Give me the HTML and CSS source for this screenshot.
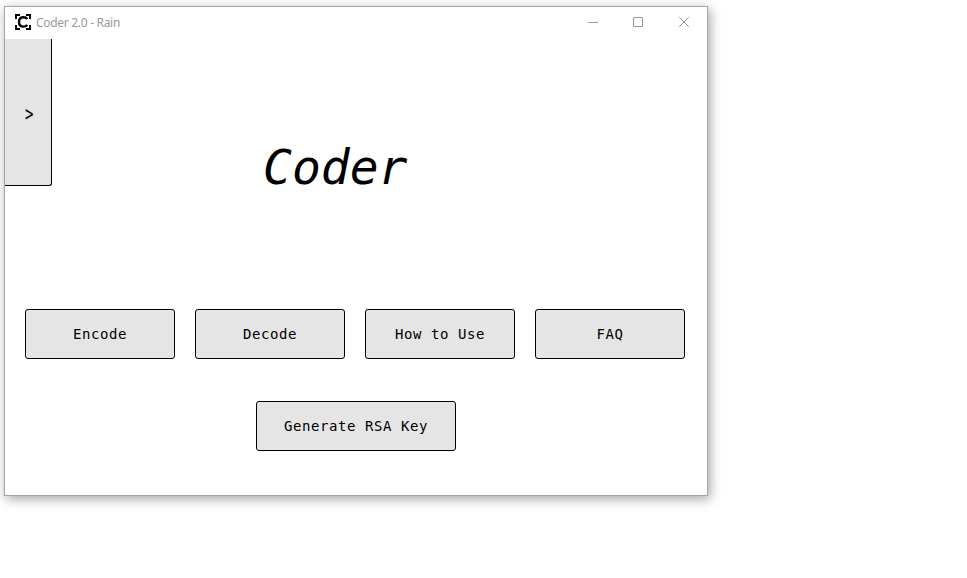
FILE: index.html
```html
<!DOCTYPE html>
<html lang="en">
<head>
<meta charset="utf-8">
<title>Coder 2.0 - Rain</title>
<link rel="stylesheet" href="styles.css">
</head>
<body>
<div class="window">
  <header class="titlebar">
    <svg class="logo" width="16" height="16" viewBox="0 0 16 16" fill="none" stroke="#000">
      <path stroke-width="2" d="M1 5V1H5M11 1H15V5M1 11V15H5M11 15H15V11"/>
      <path stroke-width="2.4" d="M12.2 5.2C11.4 3.9 10 3.3 8.5 3.3C5.6 3.3 4 5.2 4 8C4 10.8 5.6 12.6 8.5 12.6C10 12.6 11.4 12 12.2 10.8"/>
    </svg>
    <span class="caption">Coder 2.0 - Rain</span>
    <div class="controls">
      <svg width="46" height="31" viewBox="0 0 46 31"><path d="M19 15.5H29"/></svg>
      <svg width="46" height="31" viewBox="0 0 46 31"><path d="M18.5 10.5H27.5V19.5H18.5Z"/></svg>
      <svg width="46" height="31" viewBox="0 0 46 31"><path d="M18.2 10.2L27.8 19.8M27.8 10.2L18.2 19.8"/></svg>
    </div>
  </header>
  <main class="content">
    <section class="hero">
      <button class="drawer" type="button"><span class="chevron">&gt;</span></button>
      <h1 class="title">Coder</h1>
    </section>
    <nav class="actions">
      <button class="btn" type="button">Encode</button>
      <button class="btn" type="button">Decode</button>
      <button class="btn" type="button">How to Use</button>
      <button class="btn" type="button">FAQ</button>
    </nav>
    <button class="btn wide" type="button">Generate RSA Key</button>
  </main>
</div>
</body>
</html>
```

FILE: styles.css
```css
* { box-sizing: border-box; }
body {
  margin: 0;
  min-height: 100vh;
  padding: 6px 0 0 4px;
  background: #fff;
}
.window {
  width: 704px;
  height: 490px;
  border: 1px solid #a6a6a6;
  background: #fff;
  box-shadow: 2px 3px 11px rgba(0, 0, 0, 0.36);
}
.titlebar {
  display: flex;
  align-items: center;
  height: 32px;
  padding-left: 10px;
}
.logo { display: block; margin-right: 5px; margin-top: -2px; }
.caption {
  font: 12px/16px "Noto Sans", sans-serif;
  letter-spacing: -0.3px;
  color: #999;
  white-space: nowrap;
}
.controls {
  display: flex;
  align-self: flex-start;
  margin-left: auto;
}
.controls svg { display: block; fill: none; stroke: #999; }
.content { display: flex; flex-direction: column; }
.hero {
  display: flex;
  align-items: flex-start;
  height: 270px;
}
button {
  padding: 0;
  color: #000;
  background: #e5e5e5;
  font: 14px/20px "DejaVu Sans Mono", monospace;
  letter-spacing: 0.57px;
}
.drawer {
  width: 47px;
  height: 147px;
  border: solid #000;
  border-width: 0 1px 1px 0;
  border-radius: 0 0 3px 0;
  padding: 3px 0 0 3px;
}
.chevron {
  display: inline-block;
  transform: scaleY(1.45);
}
.title {
  margin: 100px 0 0 211px;
  font: italic 48px/56px "DejaVu Sans Mono", monospace;
}
.actions {
  display: flex;
  gap: 20px;
  margin-left: 20px;
}
.btn {
  width: 150px;
  height: 50px;
  border: 1px solid #000;
  border-radius: 3px;
}
.wide {
  width: 200px;
  margin: 42px 0 0 251px;
}
```
